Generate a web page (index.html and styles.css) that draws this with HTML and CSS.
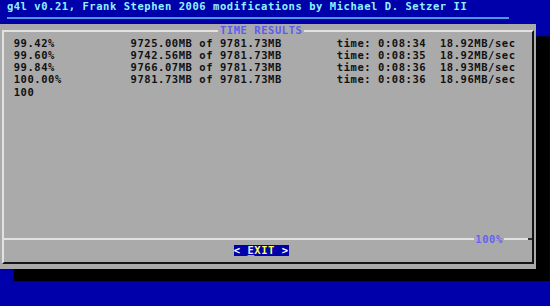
FILE: index.html
```html
<!DOCTYPE html>
<html lang="en">
<head>
  <meta charset="UTF-8">
  <meta name="viewport" content="width=device-width, initial-scale=1.0">
  <title>g4l - Time Results</title>
  <link rel="stylesheet" href="styles.css">
</head>
<body>
  <div class="backtitle">g4l v0.21, Frank Stephen 2006 modifications by Michael D. Setzer II</div>
  <div class="rule"></div>

  <div class="dialog">
    <div class="frame">
      <div class="caption">TIME RESULTS</div>
      <div class="results">
        <span>99.42%</span><span>9725.00MB of 9781.73MB</span><span>time: 0:08:34</span><span>18.92MB/sec</span>
        <span>99.60%</span><span>9742.56MB of 9781.73MB</span><span>time: 0:08:35</span><span>18.92MB/sec</span>
        <span>99.84%</span><span>9766.07MB of 9781.73MB</span><span>time: 0:08:36</span><span>18.93MB/sec</span>
        <span>100.00%</span><span>9781.73MB of 9781.73MB</span><span>time: 0:08:36</span><span>18.96MB/sec</span>
        <span>100</span>
      </div>
      <div class="separator">
        <div class="sep-line"></div>
        <span class="gauge">100%</span>
        <div class="sep-end"></div>
      </div>
      <div class="buttons">
        <button id="exitButton"><span>&lt; </span><span class="hot">E</span><span class="label">XIT</span><span> &gt;</span></button>
      </div>
    </div>
  </div>
</body>
</html>
```

FILE: styles.css
```css
:root {
  --cw: 6.875px;
  --rh: 12.24px;
}
* {
  box-sizing: border-box;
}
html, body {
  margin: 0;
}
body {
  width: 550px;
  height: 306px;
  overflow: hidden;
  background-color: #0000aa;
  font-family: 'DejaVu Sans Mono', 'Liberation Mono', monospace;
  font-size: 10.5px;
  font-weight: bold;
  letter-spacing: 0.55px;
  line-height: var(--rh);
}
.backtitle {
  height: var(--rh);
  padding-left: var(--cw);
  color: #8ff4ff;
}
.rule {
  width: 502px;
  height: 2px;
  margin: 5.12px 0 5.12px var(--cw);
  background-color: #4a98e6;
}
.dialog {
  width: 536.25px;
  height: 244.8px;
  padding: 5.1px 2.4px;
  background-color: #aaaaaa;
  box-shadow: 13.75px 12.24px 0 #000;
}
.frame {
  position: relative;
  height: 100%;
  display: flex;
  flex-direction: column;
  padding: 5.1px 0 5.14px 0;
  border: 2px solid;
  border-color: #e2e2e2 #151515 #151515 #e2e2e2;
}
.caption {
  position: absolute;
  top: -7.1px;
  left: 213.6px;
  padding: 0 1.5px 0 2px;
  background-color: #aaaaaa;
  color: #5c5cf0;
}
.results {
  flex: 1;
  display: grid;
  grid-template-columns: 116.875px 206.25px 103.125px auto;
  grid-auto-rows: var(--rh);
  align-content: start;
  padding-left: 9.35px;
  color: #111;
  white-space: pre;
}
.separator {
  height: var(--rh);
  display: flex;
  align-items: center;
}
.sep-line {
  flex: 1;
  height: 2px;
  background-color: #e2e2e2;
}
.sep-end {
  width: 28px;
  height: 2px;
  background: linear-gradient(90deg, #e2e2e2 24px, #333 24px);
}
.gauge {
  padding: 0 1px;
  color: #6464f0;
}
.buttons {
  height: var(--rh);
  display: flex;
  padding-left: 229.35px;
}
button {
  height: 11px;
  margin: 0;
  padding: 0;
  border: none;
  background-color: #0000aa;
  color: #ffffff;
  font: inherit;
  letter-spacing: inherit;
  line-height: 11px;
  white-space: pre;
}
.hot {
  color: #e8e8ff;
  text-decoration: underline;
  text-decoration-color: #9a9aff;
}
.label {
  color: #ffff55;
}
```
